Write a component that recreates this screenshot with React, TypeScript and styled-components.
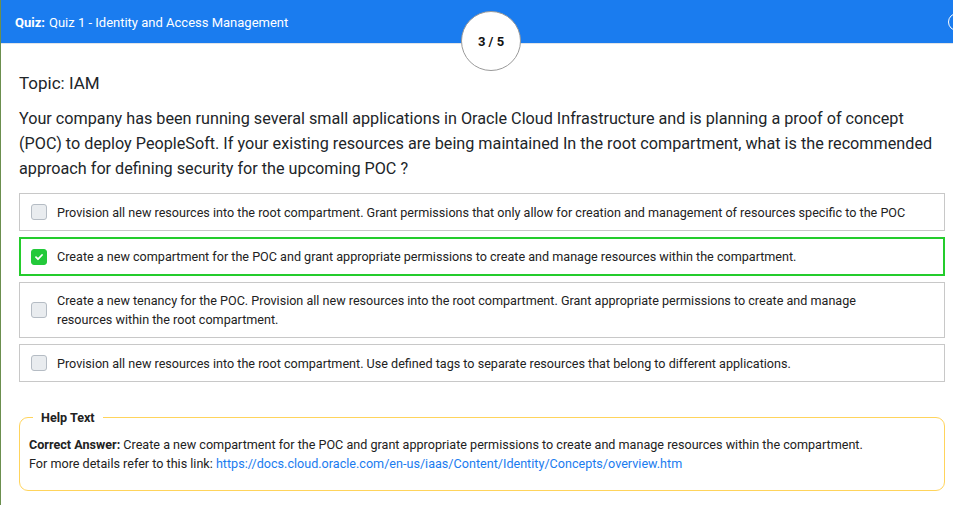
import React from "react";
import styled, { createGlobalStyle } from "styled-components";

const Global = createGlobalStyle`
  html, body { margin: 0; padding: 0; background: #fff; }
  body { font-family: Roboto, "Liberation Sans", Arial, sans-serif; color: #212529; }
  * { box-sizing: border-box; }
`;

const Page = styled.div`
  width: 953px;
  height: 505px;
  overflow: hidden;
  border-left: 1px solid #6b8f4e;
  display: flex;
  flex-direction: column;
  position: relative;
`;

const Header = styled.header`
  height: 44px;
  background: #1a7cef;
  border-bottom: 1px solid #dfe3e8;
  display: flex;
  align-items: center;
  padding: 1px 14px 0;
  color: #fff;
  font-size: 13px;
  position: relative;
  flex-shrink: 0;
`;

const HeaderLabel = styled.b`
  font-weight: 700;
  margin-right: 4px;
`;

const Counter = styled.div`
  position: absolute;
  left: 460px;
  top: 11px;
  width: 60px;
  height: 60px;
  border-radius: 50%;
  background: #fff;
  border: 1px solid #9a9a9a;
  display: flex;
  align-items: center;
  justify-content: center;
  font-size: 13px;
  font-weight: 700;
  color: #111;
  z-index: 2;
`;

const CloseCircle = styled.div`
  position: absolute;
  left: 947px;
  top: 13px;
  width: 18px;
  height: 18px;
  border-radius: 50%;
  border: 1.5px solid #fff;
`;

const Body = styled.main`
  padding: 27px 8px 0 18px;
  display: flex;
  flex-direction: column;
`;

const Topic = styled.div`
  font-size: 17px;
  line-height: 24px;
  margin-bottom: 11px;
`;

const Question = styled.p`
  margin: 0 0 12px;
  font-size: 16.2px;
  line-height: 25px;
`;

const Options = styled.div`
  display: flex;
  flex-direction: column;
  gap: 6px;
`;

const Option = styled.label<{ $correct?: boolean }>`
  display: flex;
  align-items: center;
  gap: 10px;
  min-height: 38px;
  padding: 8px 11px 8px 11px;
  border: ${(p) => (p.$correct ? "2px solid #24cc2c" : "1px solid #c8c8c8")};
  font-size: 12.6px;
  line-height: 19px;
  color: #222;
  ${(p) => (p.$correct ? "padding-left: 10px;" : "")}
`;

const OptionText = styled.span<{ $narrow?: boolean }>`
  max-width: ${(p) => (p.$narrow ? "820px" : "none")};
`;

const Box = styled.span<{ $checked?: boolean }>`
  flex-shrink: 0;
  width: 16px;
  height: 16px;
  border-radius: 3px;
  background: ${(p) => (p.$checked ? "#23c93a" : "#e9ecef")};
  border: 1px solid ${(p) => (p.$checked ? "#23c93a" : "#b5bcc4")};
  display: flex;
  align-items: center;
  justify-content: center;
`;

const Help = styled.fieldset`
  margin: 26px 0 0;
  padding: 8px 10px 17px 9px;
  border: 1px solid #ffd45c;
  border-radius: 9px;
  font-size: 12.6px;
  line-height: 19px;
  color: #222;
`;

const Legend = styled.legend`
  font-weight: 700;
  padding: 0 8px;
  margin-left: 4px;
  font-size: 12.6px;
`;

const Link = styled.a`
  color: #1a7cef;
  text-decoration: none;
`;

const options = [
  "Provision all new resources into the root compartment. Grant permissions that only allow for creation and management of resources specific to the POC",
  "Create a new compartment for the POC and grant appropriate permissions to create and manage resources within the compartment.",
  "Create a new tenancy for the POC. Provision all new resources into the root compartment. Grant appropriate permissions to create and manage resources within the root compartment.",
  "Provision all new resources into the root compartment. Use defined tags to separate resources that belong to different applications.",
];

const Check = () => (
  <svg width="10" height="10" viewBox="0 0 10 10">
    <path d="M2 5.2 L4 7.2 L8 3" stroke="#fff" strokeWidth="1.8" fill="none" strokeLinecap="round" strokeLinejoin="round" />
  </svg>
);

export default function App() {
  return (
    <Page>
      <Global />
      <Header>
        <HeaderLabel>Quiz:</HeaderLabel> Quiz 1 - Identity and Access Management
        <Counter>3 / 5</Counter>
        <CloseCircle />
      </Header>
      <Body>
        <Topic>Topic: IAM</Topic>
        <Question>
          Your company has been running several small applications in Oracle Cloud Infrastructure and is planning a proof of concept (POC) to deploy PeopleSoft. If your existing resources are being maintained In the root compartment, what is the recommended approach for defining security for the upcoming POC ?
        </Question>
        <Options>
          {options.map((o, i) => (
            <Option key={i} $correct={i === 1}>
              <Box $checked={i === 1}>{i === 1 && <Check />}</Box>
              <OptionText $narrow={i === 2}>{o}</OptionText>
            </Option>
          ))}
        </Options>
        <Help>
          <Legend>Help Text</Legend>
          <div>
            <b>Correct Answer:</b> Create a new compartment for the POC and grant appropriate permissions to create and manage resources within the compartment.
          </div>
          <div>
            For more details refer to this link:{" "}
            <Link href="#">https://docs.cloud.oracle.com/en-us/iaas/Content/Identity/Concepts/overview.htm</Link>
          </div>
        </Help>
      </Body>
    </Page>
  );
}
